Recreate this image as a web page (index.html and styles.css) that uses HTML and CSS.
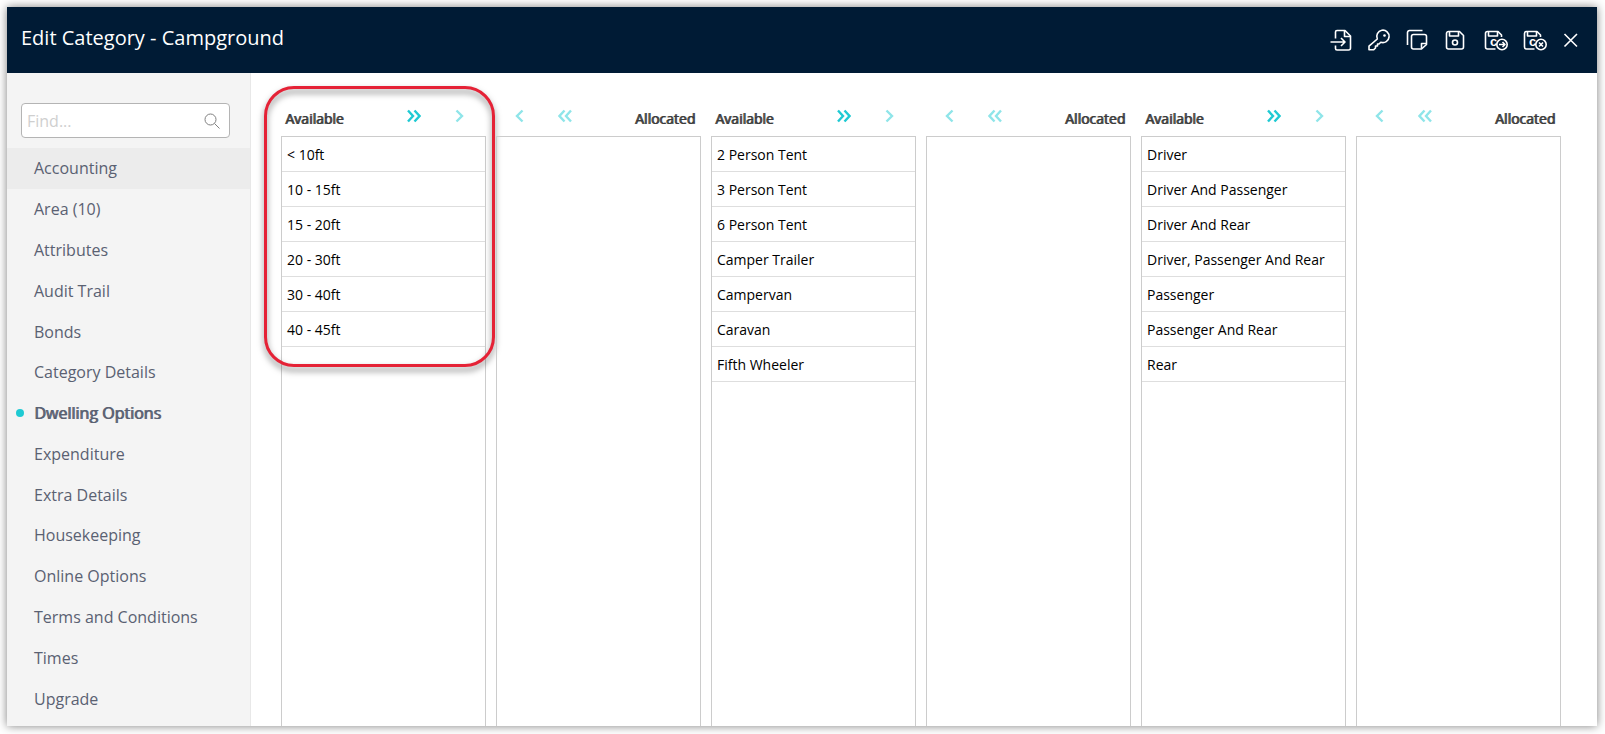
FILE: index.html
```html
<!DOCTYPE html>
<html lang="en">
<head>
    <meta charset="utf-8">
    <title>Edit Category - Campground</title>
    <link rel="stylesheet" href="styles.css">
</head>
<body>
    <div class="window">
        <header class="titlebar">
            <h1>Edit Category - Campground</h1>
            <div class="toolbar">
                <button type="button" aria-label="Import">
                    <svg width="24" height="24" viewBox="0 0 24 24">
                        <path d="M6.5 10.5V4a1.5 1.5 0 0 1 1.5-1.5h8l5.5 5.5v12a2 2 0 0 1-2 2H8A1.5 1.5 0 0 1 6.5 20.5v-3"/>
                        <path d="M15.5 2.5v6h6"/>
                        <path d="M1.5 14H16M12 10l4 4-4 4"/>
                    </svg>
                </button>
                <button type="button" aria-label="Key">
                    <svg width="24" height="24" viewBox="0 0 24 24">
                        <path d="M10.3 11a6.2 6.2 0 1 1 3.5 3.2L12 16h-1.5v2h-2v2l-2 1.8H2v-3.6z"/>
                        <circle class="dot" cx="17.5" cy="7.5" r="1.3"/>
                    </svg>
                </button>
                <button type="button" aria-label="Copy">
                    <svg width="24" height="24" viewBox="0 0 24 24">
                        <path d="M2.5 17V4.500a2 2 0 0 1 2-2h13"/>
                        <path d="M8.5 6.500h11a2 2 0 0 1 2 2v8l-5 4.500h-8a2 2 0 0 1-2-2v-10.500a2 2 0 0 1 2-2z"/>
                        <path d="M21 15.5h-4.500v5"/>
                    </svg>
                </button>
                <button type="button" aria-label="Save">
                    <svg width="24" height="24" viewBox="0 0 24 24">
                        <path d="M5.5 3.5h11l4 4V19a2 2 0 0 1-2 2h-13a2 2 0 0 1-2-2V5.5a2 2 0 0 1 2-2z"/>
                        <path d="M6.5 3.5V8h9V3.5"/>
                        <circle cx="12" cy="14.5" r="2.5"/>
                    </svg>
                </button>
                <button type="button" class="wide" aria-label="Save and continue">
                    <svg width="28" height="24" viewBox="0 0 28 24">
                        <path d="M15.5 21H7.500a2 2 0 0 1-2-2V5.500a2 2 0 0 1 2-2h10.500l3.500 3.500V9"/>
                        <path d="M8.5 3.5V8h9V3.5"/>
                        <text x="10" y="18">c</text>
                        <circle cx="22" cy="16.5" r="5.2"/>
                        <path d="M19 16.5h6M22.500 14l2.500 2.500-2.500 2.500"/>
                    </svg>
                </button>
                <button type="button" class="wide" aria-label="Save and close">
                    <svg width="28" height="24" viewBox="0 0 28 24">
                        <path d="M15.5 21H7.500a2 2 0 0 1-2-2V5.500a2 2 0 0 1 2-2h10.500l3.500 3.500V9"/>
                        <path d="M8.5 3.5V8h9V3.5"/>
                        <text x="10" y="18">c</text>
                        <circle cx="22" cy="16.5" r="5.2"/>
                        <path d="M20 14.5l4 4M24 14.5l-4 4"/>
                    </svg>
                </button>
                <button type="button" aria-label="Close">
                    <svg width="24" height="24" viewBox="0 0 24 24">
                        <path d="M5.5 6l12.500 12.500M18 6L5.500 18.500"/>
                    </svg>
                </button>
            </div>
        </header>

        <div class="content">
            <aside class="sidebar">
                <div class="search">
                    <input type="text" id="find" placeholder="Find..." aria-label="Find">
                    <svg width="18" height="18" viewBox="0 0 18 18">
                        <circle cx="7.5" cy="7.5" r="5.5"/>
                        <path d="M11.5 11.5l5 5"/>
                    </svg>
                </div>
                <nav class="menu">
                    <a href="#" class="hover">Accounting</a>
                    <a href="#">Area (10)</a>
                    <a href="#">Attributes</a>
                    <a href="#">Audit Trail</a>
                    <a href="#">Bonds</a>
                    <a href="#">Category Details</a>
                    <a href="#" class="active">Dwelling Options</a>
                    <a href="#">Expenditure</a>
                    <a href="#">Extra Details</a>
                    <a href="#">Housekeeping</a>
                    <a href="#">Online Options</a>
                    <a href="#">Terms and Conditions</a>
                    <a href="#">Times</a>
                    <a href="#">Upgrade</a>
                </nav>
            </aside>

            <main class="lists">
                <section class="column">
                    <div class="column-head">
                        <h2>Available</h2>
                        <div class="arrows">
                            <button type="button" class="on" aria-label="Add all"><svg width="14" height="14" viewBox="0 0 14 14"><path d="M1 1.5L6 7l-5 5.5M7.5 1.5l5 5.5-5 5.5"/></svg></button>
                            <button type="button" aria-label="Add"><svg width="14" height="14" viewBox="0 0 14 14"><path d="M4.5 1.5L10 7l-5.500 5.500"/></svg></button>
                        </div>
                    </div>
                    <ul>
                        <li>&lt; 10ft</li>
                        <li>10 - 15ft</li>
                        <li>15 - 20ft</li>
                        <li>20 - 30ft</li>
                        <li>30 - 40ft</li>
                        <li>40 - 45ft</li>
                    </ul>
                    <div class="highlight"></div>
                </section>
                <section class="column">
                    <div class="column-head">
                        <div class="arrows">
                            <button type="button" aria-label="Remove"><svg width="14" height="14" viewBox="0 0 14 14"><path d="M9.5 1.5L4 7l5.500 5.500"/></svg></button>
                            <button type="button" aria-label="Remove all"><svg width="14" height="14" viewBox="0 0 14 14"><path d="M6.5 1.5l-5 5.5 5 5.5M13 1.5L8 7l5 5.5"/></svg></button>
                        </div>
                        <h2>Allocated</h2>
                    </div>
                    <ul></ul>
                </section>
                <section class="column">
                    <div class="column-head">
                        <h2>Available</h2>
                        <div class="arrows">
                            <button type="button" class="on" aria-label="Add all"><svg width="14" height="14" viewBox="0 0 14 14"><path d="M1 1.5L6 7l-5 5.5M7.5 1.5l5 5.5-5 5.5"/></svg></button>
                            <button type="button" aria-label="Add"><svg width="14" height="14" viewBox="0 0 14 14"><path d="M4.5 1.5L10 7l-5.500 5.500"/></svg></button>
                        </div>
                    </div>
                    <ul>
                        <li>2 Person Tent</li>
                        <li>3 Person Tent</li>
                        <li>6 Person Tent</li>
                        <li>Camper Trailer</li>
                        <li>Campervan</li>
                        <li>Caravan</li>
                        <li>Fifth Wheeler</li>
                    </ul>
                </section>
                <section class="column">
                    <div class="column-head">
                        <div class="arrows">
                            <button type="button" aria-label="Remove"><svg width="14" height="14" viewBox="0 0 14 14"><path d="M9.5 1.5L4 7l5.500 5.500"/></svg></button>
                            <button type="button" aria-label="Remove all"><svg width="14" height="14" viewBox="0 0 14 14"><path d="M6.5 1.5l-5 5.5 5 5.5M13 1.5L8 7l5 5.5"/></svg></button>
                        </div>
                        <h2>Allocated</h2>
                    </div>
                    <ul></ul>
                </section>
                <section class="column">
                    <div class="column-head">
                        <h2>Available</h2>
                        <div class="arrows">
                            <button type="button" class="on" aria-label="Add all"><svg width="14" height="14" viewBox="0 0 14 14"><path d="M1 1.5L6 7l-5 5.5M7.5 1.5l5 5.5-5 5.5"/></svg></button>
                            <button type="button" aria-label="Add"><svg width="14" height="14" viewBox="0 0 14 14"><path d="M4.5 1.5L10 7l-5.500 5.500"/></svg></button>
                        </div>
                    </div>
                    <ul>
                        <li>Driver</li>
                        <li>Driver And Passenger</li>
                        <li>Driver And Rear</li>
                        <li>Driver, Passenger And Rear</li>
                        <li>Passenger</li>
                        <li>Passenger And Rear</li>
                        <li>Rear</li>
                    </ul>
                </section>
                <section class="column">
                    <div class="column-head">
                        <div class="arrows">
                            <button type="button" aria-label="Remove"><svg width="14" height="14" viewBox="0 0 14 14"><path d="M9.5 1.5L4 7l5.500 5.500"/></svg></button>
                            <button type="button" aria-label="Remove all"><svg width="14" height="14" viewBox="0 0 14 14"><path d="M6.5 1.5l-5 5.5 5 5.5M13 1.5L8 7l5 5.5"/></svg></button>
                        </div>
                        <h2>Allocated</h2>
                    </div>
                    <ul></ul>
                </section>
            </main>
        </div>
    </div>
</body>
</html>
```
FILE: styles.css
```css
* {
    box-sizing: border-box;
}

body {
    margin: 0;
    padding: 7px 8px 8px 7px;
    min-height: 100vh;
    display: flex;
    background-color: #ffffff;
    font-family: "Open Sans", "Noto Sans", sans-serif;
}

button {
    display: flex;
    align-items: center;
    justify-content: center;
    padding: 0;
    border: none;
    background: none;
    cursor: pointer;
}

svg {
    fill: none;
    stroke: currentColor;
    flex-shrink: 0;
}

.window {
    flex: 1;
    display: flex;
    flex-direction: column;
    background-color: #ffffff;
    box-shadow: 0 0 9px rgba(0, 0, 0, 0.5);
}

.titlebar {
    display: flex;
    justify-content: space-between;
    align-items: center;
    height: 66px;
    padding: 0 7px 0 14px;
    background-color: #001b35;
    color: #ffffff;
}

.titlebar h1 {
    margin: 0;
    padding-bottom: 6px;
    font-size: 20px;
    font-weight: 400;
}

.toolbar {
    display: flex;
}

.toolbar button {
    width: 38px;
    height: 32px;
    color: #ffffff;
}

.toolbar button.wide {
    width: 39px;
}

.toolbar svg {
    stroke-width: 1.6;
    stroke-linejoin: round;
}

.toolbar .dot,
.toolbar text {
    fill: #ffffff;
    stroke: none;
}

.toolbar text {
    font-size: 13px;
    font-weight: 700;
}

.content {
    flex: 1;
    display: flex;
}

/* Sidebar */
.sidebar {
    width: 244px;
    display: flex;
    flex-direction: column;
    padding: 30px 0 7px;
    border-right: 1px solid #e8e8e8;
    background-color: #f4f4f4;
}

.search {
    display: flex;
    align-items: center;
    height: 35px;
    margin: 0 20px 10px 14px;
    padding-right: 8px;
    border: 1px solid #b4b4b4;
    border-radius: 4px;
    background-color: #ffffff;
    color: #808080;
}

.search input {
    flex: 1;
    min-width: 0;
    padding: 0 5px;
    border: none;
    outline: none;
    background: none;
    font-family: inherit;
    font-size: 16px;
}

.search input::placeholder {
    color: #cfcfcf;
}

.menu {
    flex: 1;
    display: flex;
    flex-direction: column;
}

.menu a {
    flex: 1;
    display: flex;
    align-items: center;
    padding-left: 27px;
    color: #5a6172;
    font-size: 16px;
    text-decoration: none;
}

.menu a.hover {
    background-color: #ececec;
}

.menu a.active {
    padding-left: 9px;
    text-shadow: 1px 0 #5a6172;
}

.menu a.active::before {
    content: "";
    width: 8px;
    height: 8px;
    margin-right: 10px;
    border-radius: 50%;
    background-color: #1fcad3;
}

/* Available / allocated lists */
.lists {
    flex: 1;
    display: grid;
    grid-template-columns: repeat(6, 1fr);
    gap: 10px;
    padding: 30px 36px 0 30px;
}

.column {
    position: relative;
    display: flex;
    flex-direction: column;
}

.column-head {
    display: flex;
    justify-content: space-between;
    height: 33px;
}

.column-head h2 {
    margin: 0;
    padding: 0 6px 0 4px;
    color: #3c3c3c;
    font-size: 14px;
    font-weight: 400;
    line-height: 32px;
    text-shadow: 1px 0 #3c3c3c;
}

.arrows {
    display: flex;
}

.arrows:first-child {
    margin-left: 1px;
}

.arrows:last-child {
    margin-right: 5px;
}

.arrows button {
    width: 45px;
    height: 26px;
    color: #8fe5e9;
}

.arrows button.on {
    color: #1fcad3;
}

.arrows svg {
    stroke-width: 2.4;
}

.column ul {
    flex: 1;
    margin: 0;
    padding: 0;
    border: 1px solid #cccccc;
    border-bottom: none;
    list-style: none;
}

.column li {
    height: 35px;
    padding-left: 5px;
    border-bottom: 1px solid #dedede;
    color: #000000;
    font-size: 14px;
    line-height: 36px;
    white-space: nowrap;
}

/* Red marker drawn over the first list */
.highlight {
    position: absolute;
    top: -17px;
    left: -17px;
    right: -9px;
    height: 281px;
    border: 3px solid #e52236;
    border-radius: 30px;
    filter: drop-shadow(0 4px 3px rgba(0, 0, 0, 0.5));
    pointer-events: none;
}
```
